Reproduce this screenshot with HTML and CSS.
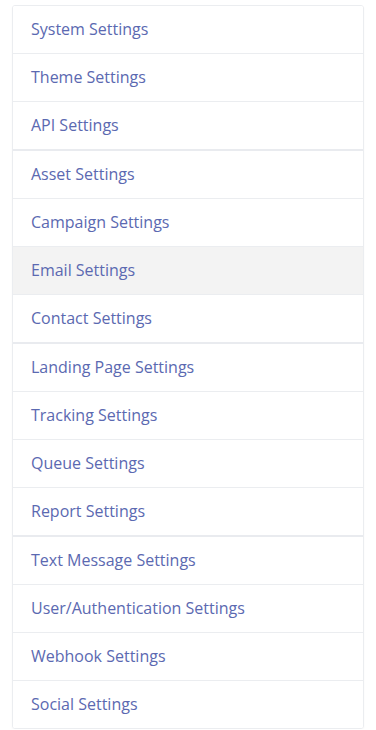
FILE: index.html
```html
<!DOCTYPE html>
<html>
<head>
<meta charset="utf-8">
<link rel="stylesheet" href="styles.css">
</head>
<body>
<div class="list">
  <a class="item">System Settings</a>
  <a class="item">Theme Settings</a>
  <a class="item group-end">API Settings</a>
  <a class="item">Asset Settings</a>
  <a class="item">Campaign Settings</a>
  <a class="item active">Email Settings</a>
  <a class="item group-end">Contact Settings</a>
  <a class="item">Landing Page Settings</a>
  <a class="item">Tracking Settings</a>
  <a class="item">Queue Settings</a>
  <a class="item group-end">Report Settings</a>
  <a class="item">Text Message Settings</a>
  <a class="item">User/Authentication Settings</a>
  <a class="item">Webhook Settings</a>
  <a class="item last">Social Settings</a>
</div>
</body>
</html>
```
FILE: styles.css
```css
html, body {
  margin: 0;
  padding: 0;
  background: #ffffff;
}
body {
  padding: 5px 12px 0 12px;
  font-family: "Open Sans", "Noto Sans", sans-serif;
}
.list {
  display: flex;
  flex-direction: column;
  border: 1px solid #ebedf0;
  border-radius: 3px;
  box-shadow: 0 1px 2px rgba(0, 0, 0, 0.04);
  overflow: hidden;
}
.item {
  display: block;
  height: 47px;
  line-height: 47px;
  padding: 0 18px;
  font-size: 16px;
  color: #5b69b1;
  text-decoration: none;
  border-bottom: 1px solid #ebedf0;
  background: #ffffff;
}
.item.group-end {
  border-bottom: 2px solid #e9ebef;
}
.item.active {
  background: #f3f3f3;
}
.item.last {
  border-bottom: none;
}
```
